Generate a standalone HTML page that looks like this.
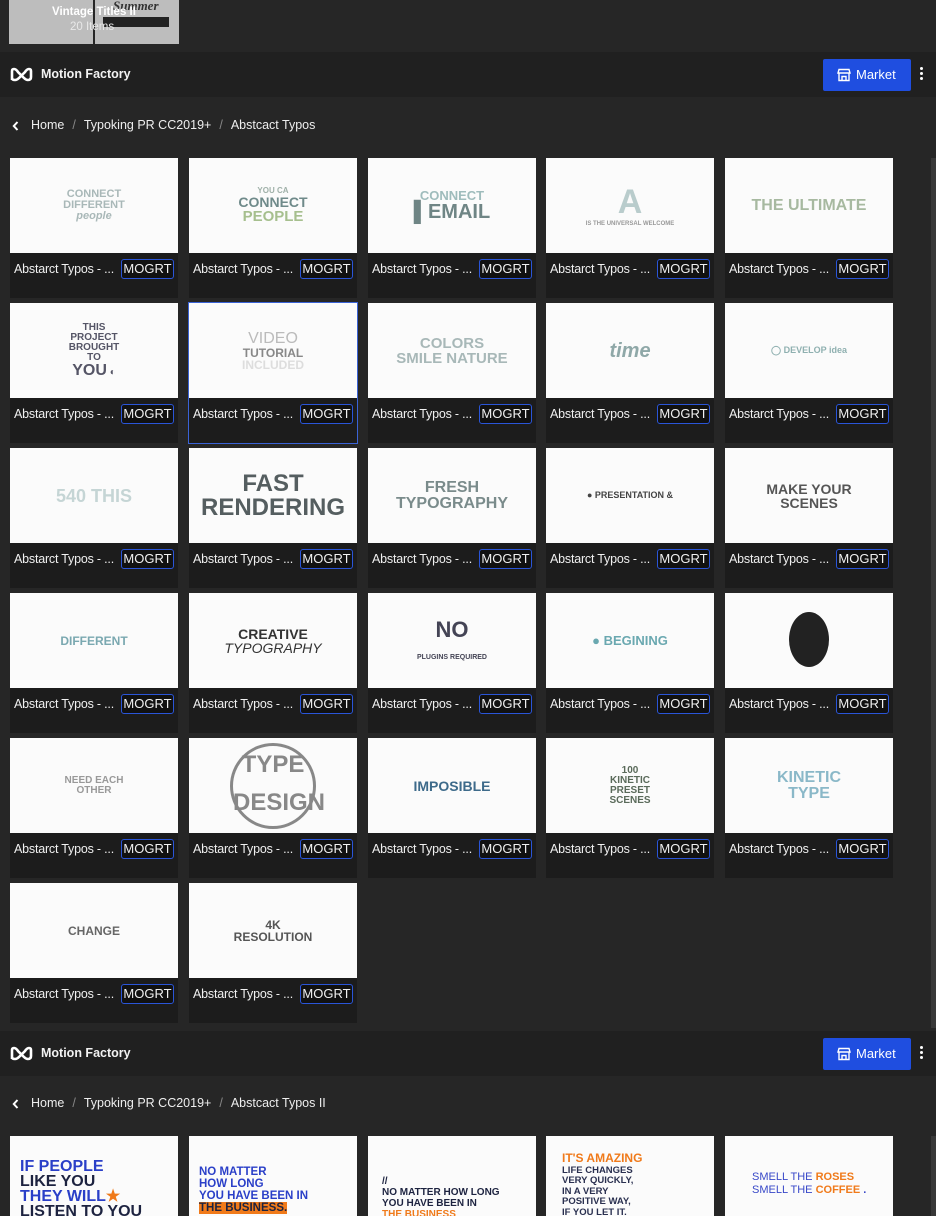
<!DOCTYPE html>
<html style="width:936px;height:1216px;overflow:hidden"><head><meta charset="utf-8">
<style>
*{margin:0;padding:0;box-sizing:border-box}
body{width:936px;height:1216px;overflow:hidden;background:#262626;font-family:"Liberation Sans",sans-serif;color:#eee;position:relative}
.abs{position:absolute}
.hdr{position:absolute;left:0;width:936px;height:45px;background:#202020}
.logo{position:absolute;left:10px;top:15px}
.brand{position:absolute;left:41px;top:15px;font-size:12.5px;font-weight:bold;color:#f2f2f2}
.mkt{position:absolute;left:823px;top:7px;width:88px;height:32px;background:#1f4ee0;border-radius:2px;color:#fff;font-size:13px;line-height:32px;padding-left:33px}
.mkt svg{position:absolute;left:14px;top:9px}
.dots{position:absolute;left:920px;top:15px;width:4px}
.dots i{display:block;width:3px;height:3px;background:#fff;border-radius:50%;margin-bottom:2px}
.bc{position:absolute;left:12px;font-size:12.5px;color:#eee}
.bc span{color:#888;margin:0 8px}
.card{position:absolute;width:168px;height:140px;background:#1c1c1c}
.th{position:absolute;left:0;top:0;width:168px;height:95px;background:#fbfbfb;overflow:hidden;display:flex;align-items:center;justify-content:center;text-align:center;color:#9fb3b3;font-weight:bold;line-height:1}
.cap{position:absolute;left:4px;top:104px;font-size:12.5px;color:#f0f0f0;white-space:nowrap;letter-spacing:-0.2px}
.tag{position:absolute;left:111px;top:101px;width:53px;height:20px;border:1.5px solid #2a55d8;border-radius:3px;background:#111;font-size:13px;line-height:17px;text-align:center;color:#f0f0f0}
.sel{outline:1px solid #3a63d6}
</style></head><body>
<div class="abs" style="left:9px;top:0;width:84px;height:44px;background:#bdbdbd"></div>
<div class="abs" style="left:95px;top:0;width:84px;height:44px;background:#bdbdbd"></div>
<div class="abs" style="left:113px;top:-2px;font-family:'Liberation Serif';font-style:italic;font-weight:bold;color:#333;font-size:13px">Summer</div>
<div class="abs" style="left:103px;top:17px;width:66px;height:10px;background:#222"></div>
<div class="abs" style="left:52px;top:6px;font-size:11.5px;color:#fff;font-weight:bold">Vintage Titles II</div>
<div class="abs" style="left:70px;top:21px;font-size:11.5px;color:#e8e8e8">20 Items</div>

<div class="hdr" style="top:52px">
<svg class="logo" width="23" height="15" viewBox="0 0 23 15"><path d="M2 13 V4 Q2 2 4 2 Q6 2 8 5 L14 11 Q16 13 18 13 Q21 13 21 10 V4 Q21 2 19 2 Q17 2 15 5 L9 11 Q7 13 5 13 Q2 13 2 11" fill="none" stroke="#fff" stroke-width="2.6"/></svg>
<div class="brand">Motion Factory</div>
<div class="mkt"><svg width="14" height="14" viewBox="0 0 14 14" fill="none" stroke="#fff" stroke-width="1.4"><path d="M2 1.5h10l1 3.5H1z M2 5v7.5h10V5 M5 12.5v-4h4v4"/></svg>Market</div>
<div class="dots"><i></i><i></i><i></i></div>
</div>
<svg class="abs" style="left:12px;top:121px" width="7" height="10" viewBox="0 0 7 10"><path d="M5.5 1 L1.8 5 L5.5 9" fill="none" stroke="#fff" stroke-width="2"/></svg>
<div class="bc" style="top:118px;left:31px">Home<span>/</span>Typoking PR CC2019+<span>/</span>Abstcact Typos</div>
<div class="abs" style="left:931px;top:158px;width:5px;height:870px;background:#383838"></div>

<div id="g1"></div>

<div class="hdr" style="top:1031px">
<svg class="logo" width="23" height="15" viewBox="0 0 23 15"><path d="M2 13 V4 Q2 2 4 2 Q6 2 8 5 L14 11 Q16 13 18 13 Q21 13 21 10 V4 Q21 2 19 2 Q17 2 15 5 L9 11 Q7 13 5 13 Q2 13 2 11" fill="none" stroke="#fff" stroke-width="2.6"/></svg>
<div class="brand">Motion Factory</div>
<div class="mkt"><svg width="14" height="14" viewBox="0 0 14 14" fill="none" stroke="#fff" stroke-width="1.4"><path d="M2 1.5h10l1 3.5H1z M2 5v7.5h10V5 M5 12.5v-4h4v4"/></svg>Market</div>
<div class="dots"><i></i><i></i><i></i></div>
</div>
<svg class="abs" style="left:12px;top:1099px" width="7" height="10" viewBox="0 0 7 10"><path d="M5.5 1 L1.8 5 L5.5 9" fill="none" stroke="#fff" stroke-width="2"/></svg>
<div class="bc" style="top:1096px;left:31px">Home<span>/</span>Typoking PR CC2019+<span>/</span>Abstcact Typos II</div>
<div class="abs" style="left:931px;top:1136px;width:5px;height:80px;background:#383838"></div>

<div class="card" style="left:10px;top:1136px;height:80px"><div class="th" style="display:block;text-align:left;padding:23px 0 0 10px;font-size:16px;line-height:15px;color:#2a3fc8">IF PEOPLE<br><span style="color:#1d2340">LIKE YOU</span><br>THEY WILL<span style="color:#f07a1a">★</span><br><span style="color:#1d2340">LISTEN TO YOU</span></div></div>
<div class="card" style="left:189px;top:1136px;height:80px"><div class="th" style="display:block;text-align:left;padding:30px 0 0 10px;font-size:11.5px;line-height:12px;color:#2a3fc8">NO MATTER<br>HOW LONG<br>YOU HAVE BEEN IN<br><span style="background:#f07a1a;color:#1d2340">THE BUSINESS.</span></div></div>
<div class="card" style="left:368px;top:1136px;height:80px"><div class="th" style="display:block;text-align:left;padding:40px 0 0 14px;font-size:10px;line-height:11px;color:#1d2340">//<br>NO MATTER HOW LONG<br>YOU HAVE BEEN IN<br><span style="color:#f07a1a">THE BUSINESS</span></div></div>
<div class="card" style="left:546px;top:1136px;height:80px"><div class="th" style="display:block;text-align:left;padding:17px 0 0 16px;font-size:9.5px;line-height:10.5px;color:#2a3050"><span style="color:#f07a1a;font-size:12px">IT'S AMAZING</span><br>LIFE CHANGES<br>VERY QUICKLY,<br>IN A VERY<br>POSITIVE WAY,<br>IF YOU LET IT.</div></div>
<div class="card" style="left:725px;top:1136px;height:80px"><div class="th" style="display:block;text-align:left;padding:35px 0 0 27px;font-size:11px;line-height:13px;color:#3848c8;font-weight:normal">SMELL THE <b style="color:#f07a1a">ROSES</b><br>SMELL THE <b style="color:#f07a1a">COFFEE</b> <b>.</b></div></div>

<script>
var th=[
['CONNECT<br>DIFFERENT<br><i>people</i>',11,'#a9b8b8'],
['YOU CA<br><span style="font-size:14px;color:#6f8a8a">CONNECT</span><br><span style="font-size:15px;color:#a6bf8e">PEOPLE</span>',8,'#9fb0a8'],
['CONNECT<br><span style="font-size:20px;color:#6f8585">▌EMAIL</span>',13,'#9fbcbc'],
['<span style="font-size:34px;color:#b9cccc">A</span><br><span style="font-size:6px">IS THE UNIVERSAL WELCOME</span>',8,'#999'],
['<span style="font-size:16px;color:#a7b9a0">THE ULTIMATE</span>',10,'#a7b9a0'],
['THIS<br>PROJECT<br>BROUGHT<br>TO<br><span style="font-size:16px">YOU</span> ◐',10,'#556'],
['<span style="font-size:16px;font-weight:normal;color:#bbb">VIDEO</span><br>TUTORIAL<br><span style="color:#ddd">INCLUDED</span>',12,'#888'],
['COLORS<br>SMILE NATURE',15,'#a8b8b8'],
['<i style="font-size:20px;color:#8fa8a8">time</i>',20,'#8fa8a8'],
['◯ DEVELOP idea',9,'#8fb0b0'],
['540 THIS',18,'#c5d5d5'],
['FAST<br>RENDERING',24,'#555e60'],
['FRESH<br>TYPOGRAPHY',16,'#7a8b8b'],
['● PRESENTATION &amp;',9,'#444'],
['MAKE YOUR<br>SCENES',14,'#555'],
['DIFFERENT',12,'#7aa8b0'],
['CREATIVE<br><i style="font-weight:normal">TYPOGRAPHY</i>',14,'#333'],
['NO<br><span style="font-size:7px">PLUGINS REQUIRED</span>',22,'#445'],
['● BEGINING',13,'#6aa8b0'],
['<span style="display:inline-block;width:40px;height:55px;border-radius:50%;background:#222"></span>',10,'#222'],
['NEED EACH<br>OTHER',10,'#999'],
['<span style="display:inline-block;width:86px;height:86px;border-radius:50%;border:3px solid #888;line-height:38px;font-size:24px;color:#888">TYPE<br>DESIGN</span>',10,'#888'],
['IMPOSIBLE',14,'#3d6a8a'],
['100<br>KINETIC<br>PRESET<br>SCENES',10,'#5a6a5a'],
['KINETIC<br>TYPE',16,'#8ab8c8'],
['CHANGE',12,'#666'],
['4K<br>RESOLUTION',12,'#555']
];
var xs=[10,189,368,546,725],h='';
for(var i=0;i<27;i++){var c=i%5,r=Math.floor(i/5);
h+='<div class="card'+(i==6?' sel':'')+'" style="left:'+xs[c]+'px;top:'+(158+r*145)+'px"><div class="th" style="font-size:'+th[i][1]+'px;color:'+th[i][2]+'"><div>'+th[i][0]+'</div></div><div class="cap">Abstarct Typos - ...</div><div class="tag">MOGRT</div></div>';}
document.getElementById('g1').outerHTML=h;
</script>
</body></html>
